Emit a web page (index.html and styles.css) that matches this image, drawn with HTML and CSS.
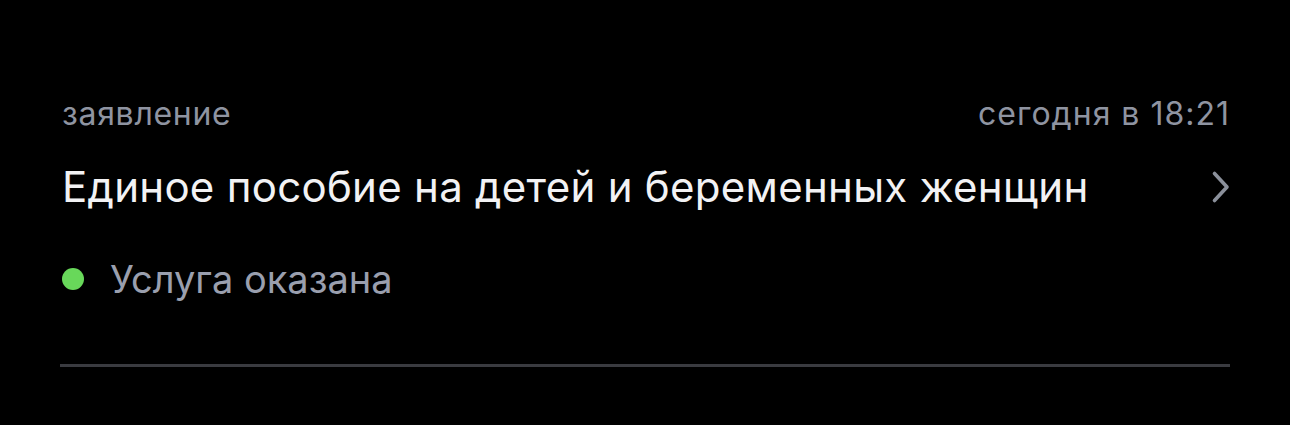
FILE: index.html
```html
<!DOCTYPE html>
<html lang="ru">
<head>
<meta charset="utf-8">
<link rel="stylesheet" href="styles.css">
</head>
<body>
<div class="card">
  <div class="meta">
    <span class="kind">заявление</span>
    <span class="date">сегодня в 18:21</span>
  </div>
  <div class="title-row">
    <span class="title">Единое пособие на детей и беременных женщин</span>
    <svg class="chev" width="20" height="34" viewBox="0 0 20 34"><path d="M3.5 3.5 L16 17 L3.5 30.5" fill="none" stroke="#8b909b" stroke-width="3.6" stroke-linecap="round" stroke-linejoin="round"/></svg>
  </div>
  <div class="status">
    <span class="dot"></span>
    <span class="status-text">Услуга оказана</span>
  </div>
  <div class="divider"></div>
</div>
</body>
</html>
```
FILE: styles.css
```css
html, body {
  margin: 0;
  padding: 0;
  background: #000;
}
body {
  width: 1290px;
  height: 425px;
  overflow: hidden;
  font-family: Inter, "Noto Sans", sans-serif;
}
.card {
  padding: 94px 60px 0 62px;
  display: flex;
  flex-direction: column;
}
.meta {
  display: flex;
  justify-content: space-between;
  align-items: baseline;
  color: #8f94a1;
  font-size: 32px;
  line-height: 40px;
  letter-spacing: 0.7px;
}
.date {
  letter-spacing: 1px;
}
.title-row {
  display: flex;
  justify-content: space-between;
  align-items: center;
  margin-top: 28px;
}
.title {
  color: #f2f2f4;
  font-size: 42px;
  line-height: 50px;
  letter-spacing: 0.28px;
}
.chev {
  margin-right: -1px;
}
.status {
  display: flex;
  align-items: center;
  gap: 26px;
  margin-top: 44px;
}
.dot {
  width: 22px;
  height: 22px;
  border-radius: 50%;
  background: #68d85a;
}
.status-text {
  color: #9a9fae;
  font-size: 38px;
  line-height: 46px;
}
.divider {
  height: 3px;
  background: #3a3b40;
  margin-top: 62px;
  margin-left: -2px;
}
```
